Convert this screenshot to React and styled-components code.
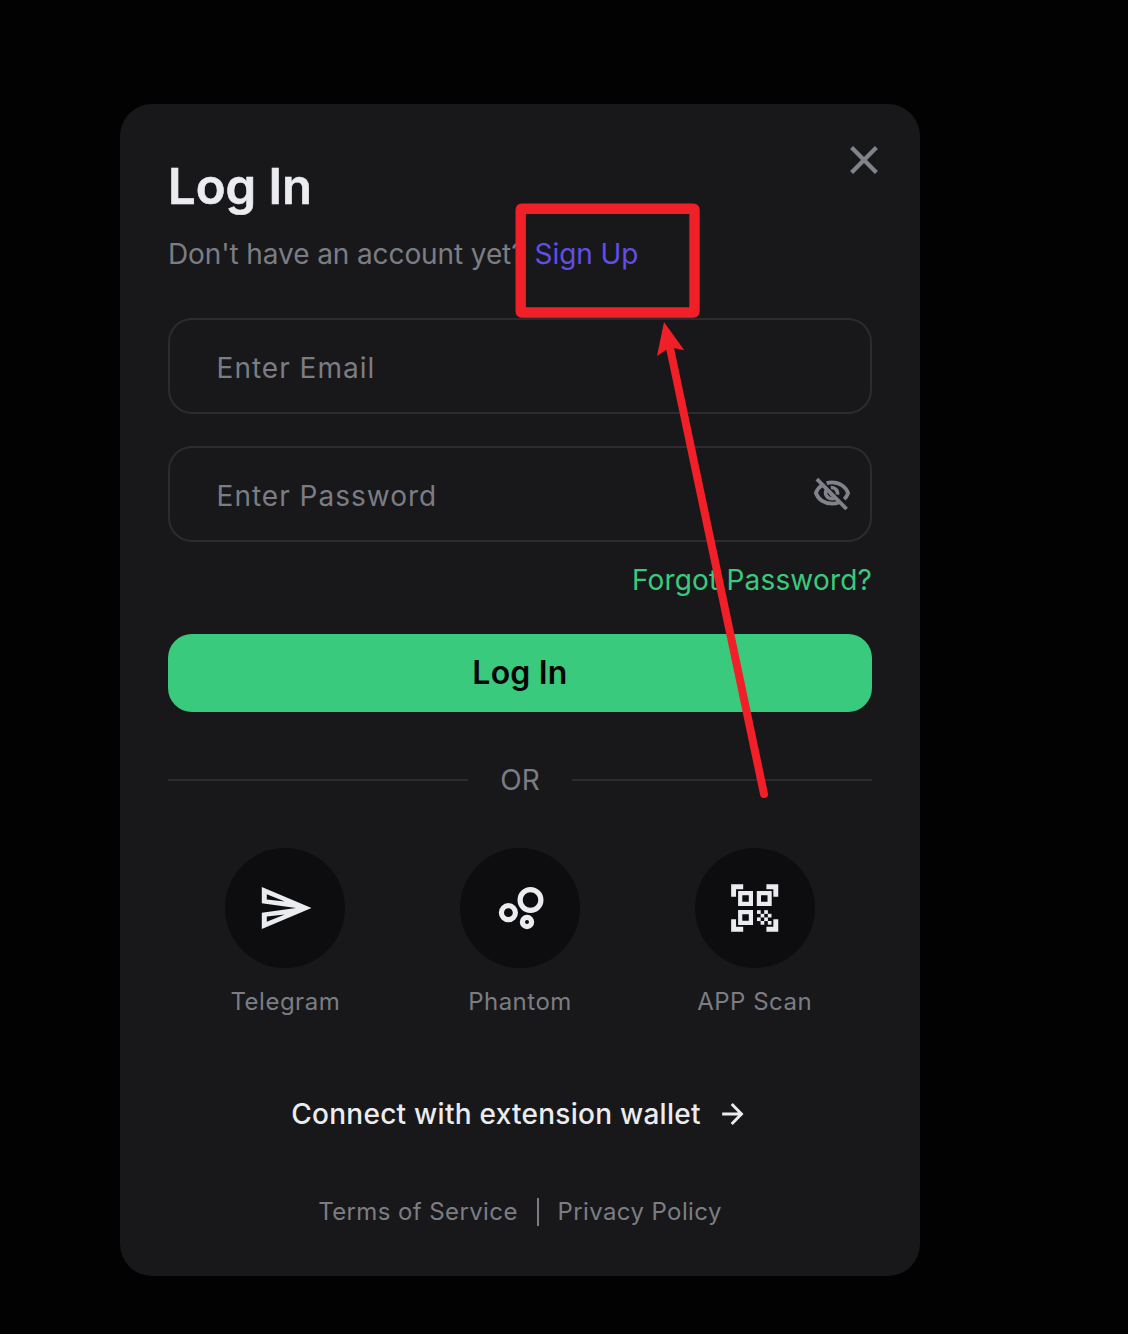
import React from "react";
import styled, { createGlobalStyle } from "styled-components";

const GlobalStyle = createGlobalStyle`
  * { box-sizing: border-box; }
  body { margin: 0; background: #020202; font-family: Inter, "Liberation Sans", sans-serif; }
  button, input { font-family: inherit; }
`;

const Page = styled.main`
  position: relative;
  width: 1128px;
  height: 1334px;
  padding: 104px 120px;
  background: #020202;
  overflow: hidden;
`;

const Card = styled.section`
  display: flex;
  flex-direction: column;
  width: 800px;
  height: 1172px;
  padding: 36px 48px 47px;
  border-radius: 32px;
  background: #18181a;
`;

const Header = styled.header`
  display: flex;
  justify-content: space-between;
  align-items: flex-start;
  height: 97px;
`;

const Title = styled.h1`
  margin: 16px 0 0;
  font-size: 49px;
  font-weight: 600;
  line-height: 61px;
  -webkit-text-stroke: 0.6px #ebecf0;
  color: #ebecf0;
`;

const CloseButton = styled.button`
  display: flex;
  margin-right: -12px;
  padding: 0;
  border: 0;
  background: none;
  color: #81838c;
`;

const Prompt = styled.p`
  margin: 0;
  font-size: 28px;
  line-height: 34px;
  letter-spacing: -0.1px;
  color: #7b7d85;
  white-space: pre;
`;

const SignUpLink = styled.a`
  margin-left: 9.2px;
  letter-spacing: -0.08px;
  color: #5f4fe6;
`;

const Fields = styled.div`
  display: flex;
  flex-direction: column;
  gap: 32px;
  margin-top: 47px;
`;

const Field = styled.label`
  display: flex;
  align-items: center;
  height: 96px;
  padding: 0 18px 0 46.6px;
  border: 2px solid #2b2b31;
  border-radius: 24px;
`;

const Input = styled.input`
  flex: 1;
  min-width: 0;
  padding: 4px 0 0;
  border: 0;
  outline: 0;
  background: none;
  font-size: 28px;
  line-height: 34px;
  letter-spacing: 1px;
  color: #ebecf0;
  &::placeholder { color: #7b7d85; opacity: 1; }
`;

const ForgotLink = styled.a`
  align-self: flex-end;
  margin-top: 21px;
  font-size: 28px;
  line-height: 34px;
  letter-spacing: 0.18px;
  color: #3aca7d;
`;

const SubmitButton = styled.button`
  height: 78px;
  margin-top: 37px;
  padding: 0 0 2px;
  border: 0;
  border-radius: 24px;
  background: #3aca7d;
  font-size: 32px;
  font-weight: 600;
  letter-spacing: 0.2px;
  color: #050505;
`;

const Divider = styled.div`
  display: flex;
  align-items: center;
  justify-content: space-between;
  height: 34px;
  margin-top: 51px;
  font-size: 28px;
  line-height: 34px;
  color: #7b7d85;
  &::before, &::after {
    content: "";
    width: 300px;
    height: 2px;
    background: #2b2b31;
  }
`;

const Providers = styled.div`
  display: grid;
  grid-template-columns: repeat(3, 1fr);
  margin-top: 51px;
`;

const Provider = styled.div`
  display: flex;
  flex-direction: column;
  align-items: center;
  gap: 19px;
`;

const ProviderIcon = styled.span`
  display: flex;
  align-items: center;
  justify-content: center;
  width: 120px;
  height: 120px;
  border-radius: 50%;
  background: #0d0d0f;
  color: #ebecf0;
`;

const ProviderName = styled.span`
  font-size: 24px;
  line-height: 30px;
  letter-spacing: 0.5px;
  color: #7b7d85;
`;

const WalletLink = styled.a`
  display: flex;
  align-items: center;
  justify-content: center;
  gap: 16px;
  margin-top: 80px;
  font-size: 28px;
  font-weight: 500;
  line-height: 34px;
  letter-spacing: 0.26px;
  color: #ebecf0;
`;

const Footer = styled.footer`
  display: flex;
  align-items: center;
  justify-content: center;
  gap: 18.8px;
  margin-top: 66px;
  font-size: 24px;
  line-height: 30px;
  letter-spacing: 0.4px;
  color: #7b7d85;
`;

const FooterRule = styled.span`
  width: 2px;
  height: 28px;
  background: #7b7d85;
`;

const Annotation = styled.svg`
  position: absolute;
  inset: 0;
  pointer-events: none;
`;

const CloseIcon = () => (
  <svg width="40" height="40" viewBox="0 0 40 40" fill="none" stroke="currentColor" strokeWidth="4.3">
    <path d="M7.600 7.600 32.400 32.400M32.400 7.600 7.600 32.400" />
  </svg>
);

const EyeOffIcon = () => (
  <svg width="40" height="40" viewBox="0 0 40 40" fill="none" stroke="#81838c" strokeWidth="3.8">
    <path d="M10.200 11.200C7 13.200 5 16 3.900 19 6.300 25.800 12.800 29.700 20 29.700c2.800 0 5.300-.6 7.500-1.700" />
    <path d="M14.600 9.100c1.700-.5 3.500-.7 5.400-.7 7.200 0 13.700 4 16.100 10.700-.8 2.300-2.100 4.400-3.900 6" />
    <path d="M14.500 15.500c-2.500 4.700.7 9.300 5.500 9.300 1.300 0 2.500-.3 3.500-1" strokeWidth="3.600" />
    <path d="M18.800 13.500c4.300-.3 7.500 3 6.600 7.200" strokeWidth="3.600" />
    <path d="M18.200 18.800c-.1 1.600.8 2.700 2.400 2.900" strokeWidth="2" />
    <path d="M4.900 5.200 34.600 35" />
  </svg>
);

const TelegramIcon = () => (
  <svg width="60" height="60" viewBox="0 0 60 60" fill="currentColor" fillRule="evenodd">
    <path d="M6.800 9 56.500 30 6.800 51V34.700L41 30 6.800 25.300ZM11.800 16.200v5.200l18 2.200ZM11.800 43.800v-5.200l18-2.200Z" />
  </svg>
);

const BubblesIcon = () => (
  <svg width="60" height="60" viewBox="0 0 60 60" fill="none" stroke="currentColor" strokeWidth="5.200">
    <circle cx="40.500" cy="22" r="10.400" />
    <circle cx="18.400" cy="34.700" r="7" />
    <circle cx="37" cy="44" r="4.600" />
  </svg>
);

const CHECKS = [
  [0, 0], [2, 0], [1, 1], [3, 1], [0, 2], [2, 2], [1, 3], [3, 3],
];

const ScanIcon = () => (
  <svg width="60" height="60" viewBox="0 0 60 60" fill="none" stroke="currentColor">
    <path d="M8.600 18.800V8.800h9.600M41.400 8.800h9.400v10M50.800 41.200v10h-9.400M18.200 51.200H8.600v-10" strokeWidth="4.900" />
    <path d="M15.200 15.200h10.700v10.700H15.200ZM33.900 15.200h10.700v10.700H33.900ZM15.200 34.100h10.700v10.700H15.200Z" strokeWidth="4.200" />
    <g fill="currentColor" stroke="none">
      {CHECKS.map(([x, y]) => (
        <rect key={`${x}-${y}`} x={32 + x * 3.6} y={32.2 + y * 3.6} width="3.700" height="3.700" />
      ))}
    </g>
  </svg>
);

const ArrowIcon = () => (
  <svg width="32" height="32" viewBox="0 0 32 32" fill="none" stroke="currentColor" strokeWidth="2.900">
    <path d="M5.200 16h18.500M14.700 6.100 24.500 16l-9.800 9.900" />
  </svg>
);

const PROVIDERS = [
  { name: "Telegram", Icon: TelegramIcon },
  { name: "Phantom", Icon: BubblesIcon },
  { name: "APP Scan", Icon: ScanIcon },
];

export default function App() {
  return (
    <Page>
      <GlobalStyle />
      <Card>
        <Header>
          <Title>Log In</Title>
          <CloseButton aria-label="Close"><CloseIcon /></CloseButton>
        </Header>
        <Prompt>
          Don't have an account yet?<SignUpLink>Sign Up</SignUpLink>
        </Prompt>
        <Fields>
          <Field><Input placeholder="Enter Email" /></Field>
          <Field>
            <Input placeholder="Enter Password" />
            <EyeOffIcon />
          </Field>
        </Fields>
        <ForgotLink>Forgot Password?</ForgotLink>
        <SubmitButton>Log In</SubmitButton>
        <Divider>OR</Divider>
        <Providers>
          {PROVIDERS.map(({ name, Icon }) => (
            <Provider key={name}>
              <ProviderIcon><Icon /></ProviderIcon>
              <ProviderName>{name}</ProviderName>
            </Provider>
          ))}
        </Providers>
        <WalletLink>Connect with extension wallet<ArrowIcon /></WalletLink>
        <Footer>
          <span>Terms of Service</span>
          <FooterRule />
          <span>Privacy Policy</span>
        </Footer>
      </Card>
      <Annotation width="1128" height="1334" viewBox="0 0 1128 1334">
        <rect x="520.700" y="208.700" width="173.800" height="103.800" rx="1" fill="none" stroke="#f01f28" strokeWidth="10.400" strokeLinejoin="round" />
        <path d="M669.800 347 764 794" stroke="#f01f28" strokeWidth="8" strokeLinecap="round" />
        <path d="M664 322 684.300 350.200 673.700 348 666 350 657 356Z" fill="#f01f28" />
      </Annotation>
    </Page>
  );
}
